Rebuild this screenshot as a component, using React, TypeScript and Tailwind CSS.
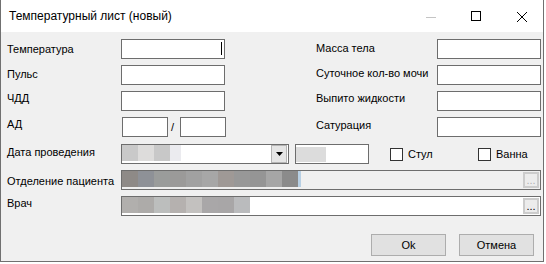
import type { ReactNode } from 'react'

// заглушки вместо размытых данных
const dateBlocks = ['w-[16px] bg-[#c9c9c9]', 'w-[16px] bg-[#dddcdb]', 'w-[16px] bg-[#c8c8c8]', 'w-[11px] bg-[#ebebef]']
const deptBlocks = [
  'bg-[#8e8a87]', 'bg-[#8e9197]', 'bg-[#9a9c9b]', 'bg-[#9b9a99]', 'bg-[#a1a1a1]', 'bg-[#a7a7a7]',
  'bg-[#9f9996]', 'bg-[#989898]', 'bg-[#959595]', 'bg-[#a6a6a6]', 'bg-[#8b8b8b]',
]
const doctorBlocks = [
  'bg-[#b1afad]', 'bg-[#adaba9]', 'bg-[#bcbebd]', 'bg-[#b5b1af]',
  'bg-[#c3c1bf]', 'bg-[#a9a7a8]', 'bg-[#a8a6a7]', 'bg-[#babbbd]',
]

function Label({ pt, w = 'w-[114px]', children }: { pt: string; w?: string; children: ReactNode }) {
  return <div className={`${w} ${pt} shrink-0 whitespace-nowrap leading-[13px]`}>{children}</div>
}

function Box({ w = 'w-[104px]', children }: { w?: string; children?: ReactNode }) {
  return <div className={`${w} h-[20px] shrink-0 border border-[#6d6d6d] bg-white`}>{children}</div>
}

function Dots({ disabled }: { disabled?: boolean }) {
  return (
    <div className="mr-[1px] mt-[1px] flex h-[16px] w-[16px] shrink-0 items-end justify-center border-2 border-[#cccccc] bg-[#ececec] pb-[1px]">
      <span className={`text-[11px] leading-[10px] ${disabled ? 'text-[#b0b0b0]' : 'text-black'}`}>...</span>
    </div>
  )
}

function Check({ label }: { label: string }) {
  return (
    <div className="flex w-[88px] shrink-0 items-start pt-[4px]">
      <div className="h-[13px] w-[13px] shrink-0 border border-[#333333] bg-white" />
      <span className="ml-[5px] leading-[13px]">{label}</span>
    </div>
  )
}

export default function App() {
  return (
    <div className="h-[264px] w-[546px] bg-white font-['Liberation_Sans',Arial,sans-serif] text-[11px] text-black">
      <div className="flex h-[262px] w-[544px] flex-col border-x border-b border-[#707070] bg-[#f0f0f0]">
        {/* заголовок окна */}
        <div className="flex h-[32px] shrink-0 items-center bg-white pl-[8px]">
          <span className="text-[12px]">Температурный лист (новый)</span>
          <div className="ml-auto flex items-center pr-[16px]">
            <svg width="10" height="10" viewBox="0 0 10 10" className="mt-[1px]">
              <path d="M0 5.5h10" stroke="#c4c4c4" strokeWidth="1" />
            </svg>
            <svg width="10" height="10" viewBox="0 0 10 10" className="ml-[35px]">
              <rect x="0.5" y="0.5" width="9" height="9" fill="none" stroke="#000" strokeWidth="1" />
            </svg>
            <svg width="10" height="10" viewBox="0 0 10 10" className="ml-[36px] mt-[1px]">
              <path d="M0 0L10 10M10 0L0 10" stroke="#000" strokeWidth="1" />
            </svg>
          </div>
        </div>

        <div className="flex flex-col pl-[6px] pt-[7px]">
          {/* строка 1 */}
          <div className="flex h-[20px]">
            <div className="flex w-[309px] shrink-0">
              <Label pt="pt-[4px]">Температура</Label>
              <Box>
                <div className="flex justify-end pr-[2px] pt-[2px]">
                  <div className="h-[13px] w-px bg-black" />
                </div>
              </Box>
            </div>
            <Label pt="pt-[3px]" w="w-[121px]">Масса тела</Label>
            <Box />
          </div>

          {/* строка 2 */}
          <div className="mt-[6px] flex h-[20px]">
            <div className="flex w-[309px] shrink-0">
              <Label pt="pt-[3px]">Пульс</Label>
              <Box />
            </div>
            <Label pt="pt-[2px]" w="w-[121px]">Суточное кол-во мочи</Label>
            <Box />
          </div>

          {/* строка 3 */}
          <div className="mt-[6px] flex h-[20px]">
            <div className="flex w-[309px] shrink-0">
              <Label pt="pt-[1px]">ЧДД</Label>
              <Box />
            </div>
            <Label pt="pt-[1px]" w="w-[121px]">Выпито жидкости</Label>
            <Box />
          </div>

          {/* строка 4 */}
          <div className="mt-[6px] flex h-[20px]">
            <div className="flex w-[309px] shrink-0">
              <Label pt="pt-[1px]">АД</Label>
              <div className="ml-[1px]">
                <Box w="w-[46px]" />
              </div>
              <div className="w-[12px] shrink-0 pl-[3px] pt-[4px] leading-[13px]">/</div>
              <Box w="w-[46px]" />
            </div>
            <Label pt="pt-[2px]" w="w-[121px]">Сатурация</Label>
            <Box />
          </div>

          {/* дата проведения */}
          <div className="mt-[7px] flex h-[20px]">
            <Label pt="pt-[2px]">Дата проведения</Label>
            <div className="flex h-[20px] w-[168px] shrink-0 border border-[#6d6d6d] bg-white">
              <div className="flex h-[16px]">
                {dateBlocks.map((c, i) => (
                  <div key={i} className={`h-full ${c}`} />
                ))}
              </div>
              <div className="ml-auto mr-[1px] flex h-full w-[16px] items-center justify-center border border-[#b4b4b4] bg-[#e5e5e5]">
                <svg width="7" height="4" viewBox="0 0 7 4">
                  <path d="M0 0h7L3.5 4z" fill="#000" />
                </svg>
              </div>
            </div>
            <div className="ml-[6px]">
              <Box w="w-[74px]">
                <div className="mt-[2px] h-[15px] w-[30px] bg-[#dcdcdc]" />
              </Box>
            </div>
            <div className="ml-[21px] flex">
              <Check label="Стул" />
              <Check label="Ванна" />
            </div>
          </div>

          {/* отделение */}
          <div className="mt-[6px] flex h-[20px]">
            <Label pt="pt-[5px]">Отделение пациента</Label>
            <div className="flex h-[20px] w-[420px] shrink-0 border border-[#6d6d6d] bg-[#f0f0f0]">
              <div className="flex h-[16px]">
                {deptBlocks.map((c, i) => (
                  <div key={i} className={`h-full w-[16px] ${c}`} />
                ))}
                <div className="h-full w-[3px] bg-[#b8d0e4]" />
              </div>
              <div className="ml-auto">
                <Dots disabled />
              </div>
            </div>
          </div>

          {/* врач */}
          <div className="mt-[6px] flex h-[20px]">
            <Label pt="pt-[1px]">Врач</Label>
            <div className="flex h-[20px] w-[420px] shrink-0 border border-[#6d6d6d] bg-white">
              <div className="flex h-[16px]">
                {doctorBlocks.map((c, i) => (
                  <div key={i} className={`h-full w-[16px] ${c}`} />
                ))}
              </div>
              <div className="ml-auto">
                <Dots />
              </div>
            </div>
          </div>

          {/* кнопки */}
          <div className="mt-[18px] flex justify-end gap-[13px] pr-[9px]">
            <button className="h-[22px] w-[75px] border border-[#adadad] bg-[#e1e1e1] leading-[13px]">Ok</button>
            <button className="h-[22px] w-[75px] border border-[#adadad] bg-[#e1e1e1] leading-[13px]">Отмена</button>
          </div>
        </div>
      </div>
    </div>
  )
}
